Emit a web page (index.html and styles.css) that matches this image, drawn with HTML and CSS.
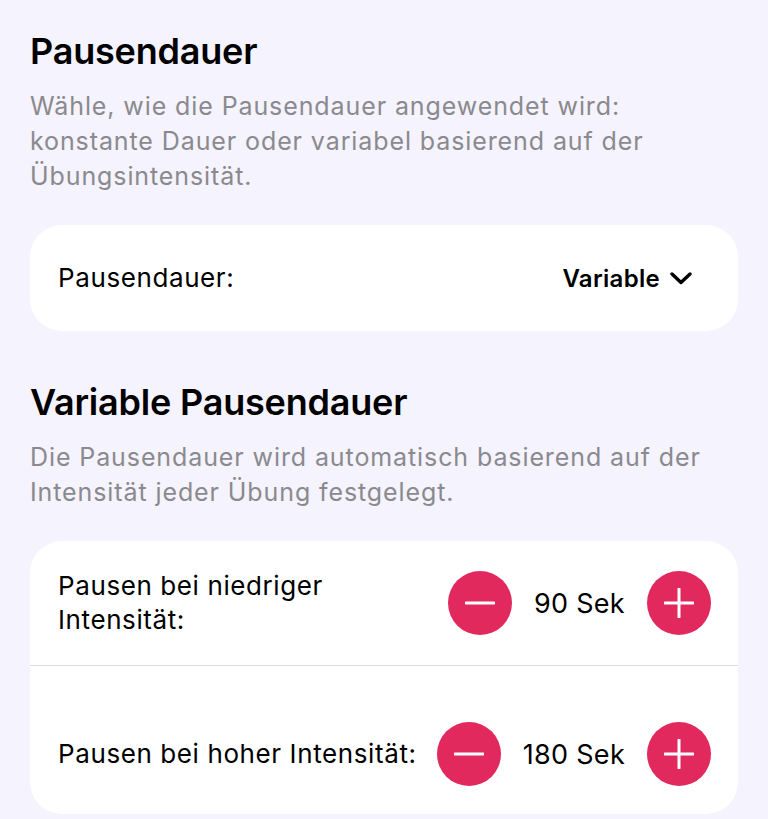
FILE: index.html
```html
<!DOCTYPE html>
<html lang="de">

<head>
    <meta charset="UTF-8">
    <meta name="viewport" content="width=device-width, initial-scale=1.0">
    <title>Pausendauer</title>
    <link rel="stylesheet" href="styles.css">
</head>

<body>
    <!-- Mode selection -->
    <section class="section">
        <h2 class="section-title">Pausendauer</h2>
        <p class="section-text">Wähle, wie die Pausendauer angewendet wird: konstante Dauer oder variabel basierend auf der Übungsintensität.</p>

        <div class="card">
            <div class="row row-select">
                <span class="row-label">Pausendauer:</span>
                <button class="picker">
                    Variable
                    <svg class="chevron" width="22" height="13" viewBox="0 0 22 13">
                        <path d="M2 2 L11 10.5 L20 2" fill="none" stroke="#000" stroke-width="3.4" stroke-linecap="round" stroke-linejoin="round"/>
                    </svg>
                </button>
            </div>
        </div>
    </section>

    <!-- Variable durations -->
    <section class="section">
        <h2 class="section-title">Variable Pausendauer</h2>
        <p class="section-text">Die Pausendauer wird automatisch basierend auf der Intensität jeder Übung festgelegt.</p>

        <div class="card">
            <div class="row row-stepper">
                <span class="row-label">Pausen bei niedriger Intensität:</span>
                <div class="stepper">
                    <button class="step-btn" aria-label="Weniger">
                        <svg width="30" height="30" viewBox="0 0 30 30"><path d="M1 15 H29" stroke="#fff" stroke-width="3" stroke-linecap="round"/></svg>
                    </button>
                    <span class="step-value">90 Sek</span>
                    <button class="step-btn" aria-label="Mehr">
                        <svg width="30" height="30" viewBox="0 0 30 30"><path d="M1 15 H29 M15 1 V29" stroke="#fff" stroke-width="3" stroke-linecap="round"/></svg>
                    </button>
                </div>
            </div>
            <div class="row row-stepper row-last">
                <span class="row-label">Pausen bei hoher Intensität:</span>
                <div class="stepper">
                    <button class="step-btn" aria-label="Weniger">
                        <svg width="30" height="30" viewBox="0 0 30 30"><path d="M1 15 H29" stroke="#fff" stroke-width="3" stroke-linecap="round"/></svg>
                    </button>
                    <span class="step-value">180 Sek</span>
                    <button class="step-btn" aria-label="Mehr">
                        <svg width="30" height="30" viewBox="0 0 30 30"><path d="M1 15 H29 M15 1 V29" stroke="#fff" stroke-width="3" stroke-linecap="round"/></svg>
                    </button>
                </div>
            </div>
        </div>
    </section>
</body>

</html>
```

FILE: styles.css
```css
/* General */
body {
    font-family: Inter, "Noto Sans", sans-serif;
    margin: 0;
    padding: 17px 30px 0;
    background-color: #f5f3fd;
    color: #000000;
}

/* Sections */
.section {
    margin-bottom: 49px;
}

.section:last-child {
    margin-bottom: 0;
}

.section-title {
    font-size: 36px;
    font-weight: 600;
    letter-spacing: -0.2px;
    line-height: 44px;
    margin: 12px 0 16px;
}

.section-text {
    font-size: 25px;
    letter-spacing: 0.9px;
    line-height: 35px;
    color: #8a8a8e;
    margin: 0 0 31px;
}

/* Cards */
.card {
    background-color: #ffffff;
    border-radius: 32px;
    overflow: hidden;
}

.row {
    display: flex;
    align-items: center;
    gap: 14px;
    padding: 0 27px 0 28px;
}

.row-label {
    flex: 1;
    font-size: 26px;
    letter-spacing: 0.6px;
    line-height: 34px;
}

.row-select {
    height: 106px;
    padding-right: 46px;
}

/* Dropdown picker */
.picker {
    display: flex;
    align-items: center;
    gap: 10px;
    border: none;
    background: none;
    padding: 0;
    font-family: inherit;
    font-size: 24px;
    font-weight: 600;
    letter-spacing: 0.3px;
    color: #000000;
}

/* Stepper rows */
.row-stepper {
    padding-top: 28px;
    padding-bottom: 28px;
    border-bottom: 1px solid #dcdcdf;
}

.row-last {
    padding-top: 56px;
    padding-bottom: 28px;
    border-bottom: none;
}

.stepper {
    display: flex;
    align-items: center;
    gap: 22px;
}

.step-btn {
    width: 64px;
    height: 64px;
    border-radius: 50%;
    border: none;
    padding: 0;
    background-color: #e1295e;
    display: flex;
    align-items: center;
    justify-content: center;
}

.step-value {
    font-size: 27px;
    letter-spacing: 0.3px;
}
```
